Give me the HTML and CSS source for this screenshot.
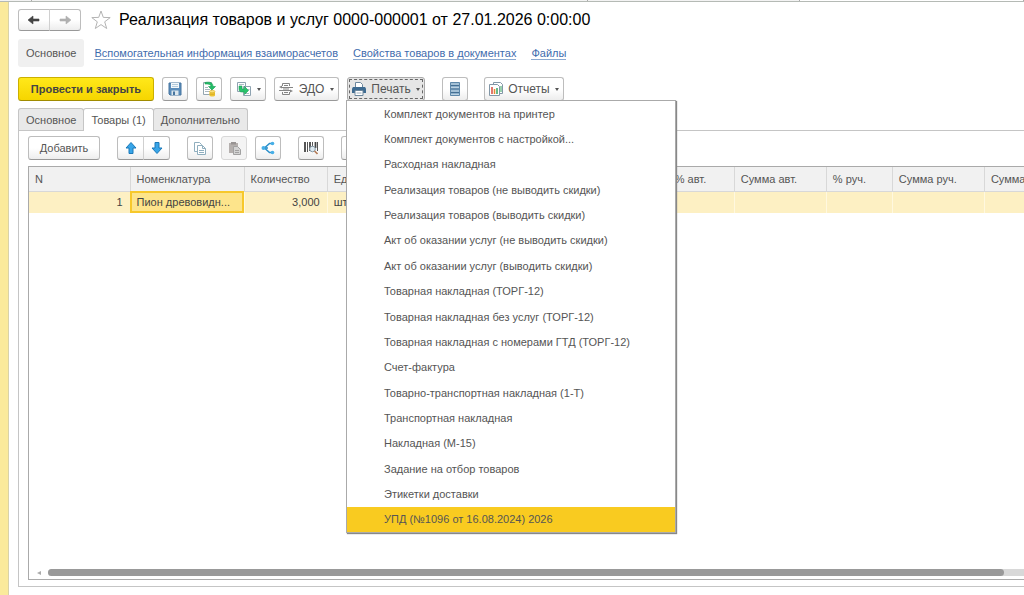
FILE: index.html
```html
<!DOCTYPE html>
<html lang="ru">
<head>
<meta charset="utf-8">
<title>Реализация товаров и услуг</title>
<link rel="stylesheet" href="styles.css">
</head>
<body>
<div class="app">
  <div class="window-tabs"><span></span><span></span><span></span><span></span></div>
  <main class="form">
    <header class="title-row">
      <div class="btn-group nav">
        <button class="btn" aria-label="Назад"><svg width="14" height="12" viewBox="0 0 14 12"><path d="M1 6l5-4v3h6v2H6v3z" fill="#444" stroke="#444" stroke-width=".6"/></svg></button>
        <button class="btn" aria-label="Вперед"><svg width="14" height="12" viewBox="0 0 14 12"><path d="M13 6L8 2v3H2v2h6v3z" fill="#b0b0b0" stroke="#b0b0b0" stroke-width=".6"/></svg></button>
      </div>
      <button class="star" aria-label="В избранное"><svg width="20" height="20" viewBox="0 0 20 20"><path d="M10 1l2.300 6.400 6.900.2-5.500 4.200 2 6.700L10 14.600l-5.700 3.900 2-6.700L.8 7.600l6.900-.2z" fill="#fff" stroke="#b4b4b4"/></svg></button>
      <h1>Реализация товаров и услуг 0000-000001 от 27.01.2026 0:00:00</h1>
    </header>
    <nav class="links">
      <span class="current">Основное</span>
      <a href="#">Вспомогательная информация взаиморасчетов</a>
      <a href="#">Свойства товаров в документах</a>
      <a href="#">Файлы</a>
    </nav>
    <div class="toolbar">
      <button class="btn primary">Провести и закрыть</button>
      <button class="btn icon" aria-label="Записать"><svg width="14" height="14" viewBox="0 0 14 14"><path d="M1 1h12v12H2l-1-1z" fill="#5b8dbb" stroke="#47759f"/><path d="M3 1h8v5H3z" fill="#f4f8fb"/><path d="M4 2.500h6M4 4.500h6" stroke="#b3cbdc"/><path d="M3.500 8.500h7V13h-7z" fill="#dce6ed"/><path d="M5 9.500h2V13H5z" fill="#47759f"/></svg></button>
      <button class="btn icon" aria-label="Провести"><svg width="16" height="16" viewBox="0 0 16 16"><path d="M2.500 1.500h8v12h-8z" fill="#fff" stroke="#94a6b1"/><path d="M4 8.500h5M4 10.500h5M4 6.500h3" stroke="#a9b7c0"/><path d="M4 1.500c5-1 8 0 8 4h2.500L11 9 7.500 5.500H10C10 3.500 8 3 4 3z" fill="#24bd68" stroke="#149c50" stroke-width=".6"/><path d="M8.500 10.500v4c0 1.300 5.500 1.300 5.500 0v-4z" fill="#edc434"/><ellipse cx="11.250" cy="10.500" rx="2.750" ry="1.200" fill="#f9e17d" stroke="#d7a91e" stroke-width=".5"/><path d="M8.500 12.500c0 1.200 5.500 1.200 5.500 0" fill="none" stroke="#c89a17" stroke-width=".5"/></svg></button>
      <button class="btn based" aria-label="Создать на основании"><svg width="16" height="16" viewBox="0 0 16 16"><path d="M1.500 1.500h8v9h-8zM7.500 5.500h7v9h-7z" fill="#fff" stroke="#8ea3b1"/><path d="M3 3.500h5M12 8.500h1.500M9 12.500h4" stroke="#afbdc7"/><path d="M3 5h3v3h2.500V5.500l4 4-4 4V11H6C4 11 3 10 3 8z" fill="#28c36b" stroke="#149c50" stroke-width=".6"/></svg><i class="caret"></i></button>
      <button class="btn edo"><svg width="14" height="14" viewBox="0 0 14 14"><path d="M3.500 4V1.500h7V4M3.500 10v2.500h7V10M5 3.500h4M5 10.500h4M3 5.500h8M3 8.500h8M4 7h6" fill="none" stroke="#858585"/><path d="M0 5l3-1.500v3zM14 9l-3-1.500v3z" fill="#858585"/><path d="M0 8.500h3M11 5.500h3" stroke="#858585"/></svg><span>ЭДО</span><i class="caret"></i></button>
      <div class="dropdown">
        <button class="btn print" aria-expanded="true"><svg width="14" height="14" viewBox="0 0 14 14"><path d="M3.500 6V.5h5l2 2V6" fill="#fff" stroke="#6c879d"/><path d="M1 5h12l1 1.500V11H0V6.500z" fill="#3e6b91"/><path d="M3 8.500h8v5H3z" fill="#fff" stroke="#6c879d"/><path d="M4.500 11h5" stroke="#9eafbc"/></svg><span>Печать</span><i class="caret"></i></button>
        <div class="menu" role="menu">
          <button role="menuitem">Комплект документов на принтер</button>
          <button role="menuitem">Комплект документов с настройкой...</button>
          <button role="menuitem">Расходная накладная</button>
          <button role="menuitem">Реализация товаров (не выводить скидки)</button>
          <button role="menuitem">Реализация товаров (выводить скидки)</button>
          <button role="menuitem">Акт об оказании услуг (не выводить скидки)</button>
          <button role="menuitem">Акт об оказании услуг (выводить скидки)</button>
          <button role="menuitem">Товарная накладная (ТОРГ-12)</button>
          <button role="menuitem">Товарная накладная без услуг (ТОРГ-12)</button>
          <button role="menuitem">Товарная накладная с номерами ГТД (ТОРГ-12)</button>
          <button role="menuitem">Счет-фактура</button>
          <button role="menuitem">Товарно-транспортная накладная (1-Т)</button>
          <button role="menuitem">Транспортная накладная</button>
          <button role="menuitem">Накладная (М-15)</button>
          <button role="menuitem">Задание на отбор товаров</button>
          <button role="menuitem">Этикетки доставки</button>
          <button role="menuitem" class="active">УПД (№1096 от 16.08.2024) 2026</button>
        </div>
      </div>
      <button class="btn icon registry" aria-label="Движения документа"><svg width="10" height="14" viewBox="0 0 10 14"><path d="M.5.500h9v13h-9z" fill="#8db0cb" stroke="#5d87a9"/><path d="M1 3.500h8M1 7h8M1 10.500h8" stroke="#456f93"/><path d="M1 2h8M1 5.500h8M1 9h8M1 12.500h8" stroke="#c6d9e6" stroke-width=".8"/></svg></button>
      <button class="btn reports"><svg width="14" height="14" viewBox="0 0 14 14"><path d="M4.500.5h7l2 2v9h-9z" fill="#fff" stroke="#8297a7"/><path d="M.5 2.500h8l2 2v9H.5z" fill="#fff" stroke="#8297a7"/><path d="M3 12V5" stroke="#d84b3e" stroke-width="1.500"/><path d="M5.500 12V7" stroke="#e68b34" stroke-width="1.500"/><path d="M8 12V6" stroke="#35a45f" stroke-width="1.500"/><path d="M12 10V4" stroke="#35a45f"/></svg><span>Отчеты</span><i class="caret"></i></button>
    </div>
    <div class="tabs" role="tablist">
      <button role="tab">Основное</button>
      <button role="tab" aria-selected="true" class="selected">Товары (1)</button>
      <button role="tab">Дополнительно</button>
    </div>
    <section class="pane">
      <div class="commands">
        <button class="btn add">Добавить</button>
        <div class="btn-group arrows">
          <button class="btn" aria-label="Вверх"><svg width="12" height="12" viewBox="0 0 12 12"><path d="M6 .5L11 6H8v5.500H4V6H1z" fill="#38a5e8" stroke="#1b78b8"/></svg></button>
          <button class="btn" aria-label="Вниз"><svg width="12" height="12" viewBox="0 0 12 12"><path d="M6 11.500L11 6H8V.5H4V6H1z" fill="#38a5e8" stroke="#1b78b8"/></svg></button>
        </div>
        <button class="btn icon copy" aria-label="Копировать"><svg width="12" height="13" viewBox="0 0 12 13"><path d="M.5.500h5l2 2v7h-7z" fill="#fff" stroke="#8faebe"/><path d="M3.500 3.500h5l3 3v6h-8z" fill="#fff" stroke="#8faebe"/><path d="M8.500 3.500v3h3M5 8.500h5M5 10.500h5" fill="none" stroke="#8faebe"/></svg></button>
        <button class="btn icon paste" aria-label="Вставить" disabled><svg width="13" height="14" viewBox="0 0 13 14"><path d="M1 2h9v10H1z" fill="#b5b0ae"/><path d="M3 1h5v2.500H3z" fill="#989493"/><path d="M5.500 5.500h4l3 3v5h-7z" fill="#d3d3d3" stroke="#a1a1a1"/><path d="M7 9.500h4M7 11.500h4" stroke="#a1a1a1"/></svg></button>
        <button class="btn icon share" aria-label="Поделиться"><svg width="14" height="14" viewBox="0 0 14 14"><path d="M11 2.500H8.500L3.500 7l5 4.500H11M3.500 7H7" fill="none" stroke="#2a8fca" stroke-width="1.500"/><circle cx="2.500" cy="7" r="2" fill="#47afe7"/><circle cx="11.500" cy="2.500" r="1.800" fill="#47afe7"/><circle cx="11.500" cy="11.500" r="1.800" fill="#47afe7"/></svg></button>
        <button class="btn icon barcode" aria-label="Штрихкод"><svg width="14" height="14" viewBox="0 0 14 14"><path d="M1 1v10M6 1v9M11.500 1v6" stroke="#444" stroke-width="1.800"/><path d="M3.500 1v10M8.500 1v5M13.500 1v9" stroke="#555"/><circle cx="8.500" cy="8" r="2.800" fill="#dce9f1" stroke="#8498a5"/><path d="M10.500 10l3 3" stroke="#b37b57" stroke-width="1.600"/></svg></button>
        <button class="btn icon more" aria-label="Ещё"></button>
      </div>
      <div class="grid">
        <table>
          <colgroup><col class="c-n"><col class="c-name"><col class="c-qty"><col class="c-unit"><col class="c-price"><col class="c-pct"><col class="c-sum"><col class="c-pct"><col class="c-sum"><col class="c-sum"></colgroup>
          <thead><tr><th>N</th><th>Номенклатура</th><th>Количество</th><th>Ед.</th><th></th><th>% авт.</th><th>Сумма авт.</th><th>% руч.</th><th>Сумма руч.</th><th>Сумма</th></tr></thead>
          <tbody><tr><td class="num">1</td><td class="cell-active">Пион древовидн...</td><td class="num">3,000</td><td>шт</td><td></td><td></td><td></td><td></td><td></td><td></td></tr></tbody>
        </table>
        <div class="scroll"><i class="scroll-left"></i><div class="track"><div class="thumb"></div></div></div>
      </div>
    </section>
    <div class="footer-line"></div>
  </main>
</div>
</body>
</html>
```

FILE: styles.css
```css
* { box-sizing: border-box; }

body {
  margin: 0;
  background: #fff;
  color: #555;
  font: 11px/16px "Liberation Sans", Arial, sans-serif;
}

button { font: inherit; color: inherit; }
svg { display: block; flex: none; }

.app {
  display: flex;
  flex-direction: column;
  height: 100vh;
  overflow: hidden;
}

.window-tabs {
  display: flex;
  flex: none;
  height: 2px;
  background: #f3f3f3;
  border-bottom: 1px solid #b5bab5;
}
.window-tabs span { flex: 0 0 212px; border-right: 1px solid #aaa; }
.window-tabs span:first-child { flex-basis: 32px; }
.window-tabs span:nth-child(2) { flex-basis: 556px; }
.window-tabs span:last-child { flex: 1; background: #fff; }

.form {
  display: flex;
  flex: 1;
  flex-direction: column;
  min-height: 0;
  padding: 7px 0 0 10px;
  border-left: 8px solid #fbea9b;
  box-shadow: inset 1px 0 #d9d2a8;
}

.btn {
  display: flex;
  align-items: center;
  justify-content: center;
  height: 24px;
  padding: 0;
  border: 1px solid #bdbdbd;
  border-bottom-color: #999;
  border-radius: 3px;
  background: linear-gradient(#fff 50%, #ededed);
}
.btn.icon { width: 26px; }
.btn-group { display: flex; }
.btn-group .btn:first-child { border-radius: 3px 0 0 3px; }
.btn-group .btn:last-child { margin-left: -1px; border-radius: 0 3px 3px 0; border-left-color: #d0d0d0; }

.caret {
  border: 2px solid transparent;
  border-top: 3px solid #555;
  border-bottom: 0;
}

.title-row { display: flex; align-items: center; height: 22px; }
.nav .btn { width: 32px; height: 22px; }
.star { margin: 0 8px 0 10px; padding: 0; border: 0; background: none; }
h1 { margin: 0; color: #000; font-size: 16px; font-weight: 400; line-height: 22px; white-space: nowrap; }

.links { display: flex; align-items: center; gap: 15px; margin-top: 8px; }
.current { margin-right: -5px; padding: 6px 8px; border-radius: 3px; background: #f0f0f0; }
.links a { color: #3f6cad; line-height: 12px; text-decoration: none; border-bottom: 1px solid #8ba9d0; }

.toolbar { display: flex; margin-top: 10px; gap: 8px; }
.primary {
  width: 136px;
  border-color: #cbb000;
  border-bottom-color: #a08b00;
  background: linear-gradient(#ffe81a, #f6d500);
  color: #444;
  font-weight: 700;
}
.based { width: 36px; gap: 5px; }
.edo { width: 65px; gap: 6px; font-size: 12px; }
.dropdown { position: relative; }
.print {
  width: 78px;
  gap: 5px;
  background: #e6e6e6;
  border-color: #aaa;
  outline: 1px dashed #666;
  outline-offset: -3px;
  font-size: 12px;
}
.registry { margin: 0 8px 0 9px; }
.reports { width: 80px; gap: 5px; font-size: 12px; }

.menu {
  position: absolute;
  z-index: 2;
  top: 23px;
  left: -1px;
  display: flex;
  flex-direction: column;
  width: 330px;
  min-height: 433px;
  border: 1px solid #aaa;
  background: #fff;
  box-shadow: 1px 1px 1px #888;
}
.menu button {
  flex: 1;
  padding: 0 0 0 37px;
  border: 0;
  background: none;
  text-align: left;
  white-space: nowrap;
}
.menu .active { background: #f9cb20; }

.tabs { display: flex; margin-top: 7px; }
.tabs button {
  height: 22px;
  padding: 0 7px;
  border: 1px solid #c5c5c5;
  border-bottom: 0;
  border-radius: 3px 3px 0 0;
  background: #e9e9e9;
}
.tabs button + button { margin-left: -1px; }
.tabs .selected { z-index: 1; height: 23px; margin-bottom: -1px; background: #fff; }

.pane {
  display: flex;
  flex: 1;
  flex-direction: column;
  min-height: 0;
  padding: 5px 0 6px 9px;
  border: 1px solid #c5c5c5;
  border-right: 0;
}
.commands { display: flex; }
.add { width: 72px; margin-right: 17px; }
.arrows { margin-right: 17px; }
.arrows .btn { width: 27px; }
.copy, .paste { margin-right: 8px; }
.paste { border-color: #d8d8d8; background: #f4f4f4; }
.share, .barcode { margin-right: 17px; }

.grid {
  display: flex;
  flex: 1;
  flex-direction: column;
  justify-content: space-between;
  min-height: 0;
  margin-top: 6px;
  overflow: hidden;
  border: 1px solid #aaa;
  border-right: 0;
}
table { width: 1048px; border-collapse: collapse; table-layout: fixed; }
.c-n { width: 101px; }
.c-name { width: 114px; }
.c-qty { width: 83px; }
.c-unit { width: 60px; }
.c-price { width: 281px; }
.c-pct { width: 66px; }
.c-sum { width: 92px; }
th, td { padding: 0 7px 0 6px; text-align: left; font-weight: 400; white-space: nowrap; }
th { height: 24px; border-right: 1px solid #d8d8d8; border-bottom: 1px solid #d8d8d8; background: #f1f1f1; }
td { height: 22px; border-right: 1px solid #fff8df; background: #fdf0c3; color: #444; }
td.num { text-align: right; }
td.cell-active { background: #fde48b; outline: 2px solid #f7c82b; outline-offset: -2px; }

.scroll { display: flex; align-items: center; gap: 7px; height: 11px; padding: 0 0 2px 8px; }
.scroll-left { border: 2px solid transparent; border-left: 0; border-right: 4px solid #aaa; }
.track { flex: 1; height: 7px; border-radius: 4px 0 0 4px; background: #d8d8d8; }
.thumb { width: 98%; height: 7px; border-radius: 4px; background: #999; }

.footer-line { flex: none; height: 8px; }
```
